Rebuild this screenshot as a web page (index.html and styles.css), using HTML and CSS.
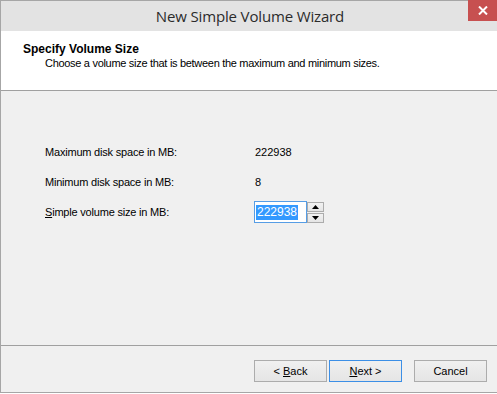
FILE: index.html
```html
<!DOCTYPE html>
<html lang="en">
<head>
    <meta charset="UTF-8">
    <title>New Simple Volume Wizard</title>
    <link rel="stylesheet" href="styles.css">
</head>
<body>
    <div class="window">
        <div class="titlebar">
            <span class="title">New Simple Volume Wizard</span>
            <div class="close-btn">
                <svg width="10" height="9" viewBox="0 0 10 9">
                    <path d="M1 0.5 L9 8.5 M9 0.5 L1 8.5" stroke="#fff" stroke-width="2"/>
                </svg>
            </div>
        </div>

        <div class="header">
            <div class="header-title">Specify Volume Size</div>
            <div class="header-sub">Choose a volume size that is between the maximum and minimum sizes.</div>
        </div>

        <div class="content">
            <div class="row">
                <span class="label">Maximum disk space in MB:</span>
                <span class="value">222938</span>
            </div>
            <div class="row">
                <span class="label">Minimum disk space in MB:</span>
                <span class="value">8</span>
            </div>
            <div class="row row-input">
                <span class="label"><u>S</u>imple volume size in MB:</span>
                <div class="spin">
                    <div class="spin-field"><span class="selected">222938</span></div>
                    <div class="spin-buttons">
                        <div class="spin-btn">
                            <svg width="7" height="4" viewBox="0 0 7 4"><path d="M3.5 0 L7 4 L0 4 Z" fill="#000"/></svg>
                        </div>
                        <div class="spin-btn">
                            <svg width="7" height="4" viewBox="0 0 7 4"><path d="M0 0 L7 0 L3.5 4 Z" fill="#000"/></svg>
                        </div>
                    </div>
                </div>
            </div>
        </div>

        <div class="footer">
            <button class="btn">&lt; <u>B</u>ack</button>
            <button class="btn btn-default"><u>N</u>ext &gt;</button>
            <button class="btn btn-cancel">Cancel</button>
        </div>
    </div>
</body>
</html>
```

FILE: styles.css
```css
html, body {
    margin: 0;
    padding: 0;
    background-color: #ffffff;
}
body {
    font-family: "Liberation Sans", Arial, sans-serif;
    font-size: 11px;
    color: #000;
}
.window {
    position: relative;
    width: 496px;
    height: 391px;
    border-top: 1px solid #a6a6a6;
    border-left: 1px solid #a6a6a6;
    border-bottom: 1px solid #a6a6a6;
    display: flex;
    flex-direction: column;
    background-color: #f0f0f0;
}
.titlebar {
    height: 30px;
    background-color: #e3e3e3;
    display: flex;
    align-items: center;
    justify-content: center;
}
.title {
    font-family: "Open Sans", "Noto Sans", sans-serif;
    font-size: 15px;
    letter-spacing: -0.15px;
    color: #2b2b2b;
    padding-left: 2px;
    margin-top: -1px;
}
.close-btn {
    position: absolute;
    top: -1px;
    right: 0;
    width: 29px;
    height: 21px;
    background-color: #c75050;
    display: flex;
    align-items: center;
    justify-content: center;
}
.header {
    background-color: #fff;
    border-bottom: 1px solid #a0a0a0;
    padding: 11px 0 0 22px;
    box-sizing: border-box;
    height: 60px;
}
.header-title {
    font-weight: bold;
    font-size: 12px;
    line-height: 14px;
}
.header-sub {
    padding-left: 22px;
    line-height: 14px;
    letter-spacing: -0.3px;
}
.content {
    flex: 1;
    padding: 54px 0 0 44px;
    display: flex;
    flex-direction: column;
    gap: 16px;
    border-bottom: 1px solid #a0a0a0;
}
.row {
    display: flex;
    align-items: center;
    height: 14px;
}
.label {
    width: 210px;
    letter-spacing: -0.2px;
}
.row-input {
    height: 22px;
    margin-top: -4px;
}
.spin {
    display: flex;
    align-items: center;
    margin-left: -1px;
}
.spin-field {
    width: 50px;
    height: 20px;
    border: 1px solid #569de5;
    background-color: #fff;
    display: flex;
    align-items: center;
    padding-left: 1px;
}
.selected {
    background-color: #3399ff;
    color: #fff;
    font-size: 12px;
    line-height: 15px;
    padding: 0 1px;
}
.spin-buttons {
    display: flex;
    flex-direction: column;
    gap: 1px;
}
.spin-btn {
    width: 15px;
    height: 8px;
    border: 1px solid #acacac;
    background: linear-gradient(#f2f2f2, #e5e5e5);
    display: flex;
    align-items: center;
    justify-content: center;
}
.footer {
    height: 46px;
    display: flex;
    align-items: flex-start;
    padding: 14px 0 0 253px;
    box-sizing: border-box;
    gap: 2px;
}
.btn {
    width: 73px;
    height: 22px;
    border: 1px solid #acacac;
    background: linear-gradient(#f0f0f0, #e5e5e5);
    font-family: "Liberation Sans", Arial, sans-serif;
    font-size: 11px;
    color: #000;
    padding: 0;
    margin: 0;
}
.btn-default {
    border-color: #3c8fe6;
}
.btn-cancel {
    margin-left: 10px;
}
```
